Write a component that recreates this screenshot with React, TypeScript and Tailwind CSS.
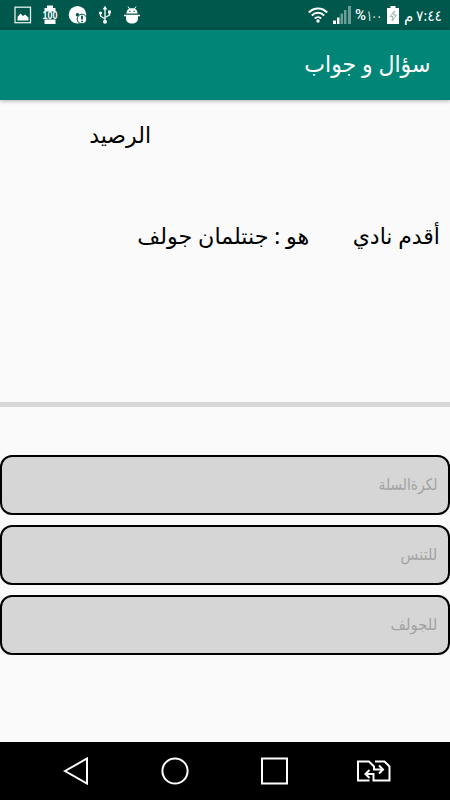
import React from 'react';

const answers = [
  { text: 'لكرةالسلة', scale: 'scale-x-[0.86]' },
  { text: 'للتنس', scale: 'scale-x-[0.91]' },
  { text: 'للجولف', scale: 'scale-x-[0.93]' },
];

const StatusBar: React.FC = () => (
  <div dir="ltr" className="h-[30px] bg-[#00574b] flex items-center justify-between pl-[14px] pr-2 text-white">
    <div className="flex items-center">
      <svg className="w-[18px] h-[18px]" viewBox="0 0 18 18">
        <rect x="1" y="1.2" width="15.5" height="15.5" fill="none" stroke="#e3eeec" strokeWidth="1.3" />
        <path d="M3.500 14.500V11l3-3.500 2.500 2.500 2-1.500 3.500 3v3z" fill="#fff" />
      </svg>
      <svg className="w-4 h-5 ml-[10px]" viewBox="0 0 16 20">
        <path d="M5 .5h6V3h2.500v3.500h-11V3H5zM2.500 14.500h11V19h-11z" fill="#fff" />
        <text x="8" y="14" textAnchor="middle" fontSize="10" fontWeight="bold" textLength="15" lengthAdjust="spacingAndGlyphs" fill="#fff" fontFamily="Liberation Sans">100</text>
      </svg>
      <svg className="w-5 h-5 ml-[10px]" viewBox="0 0 20 20">
        <circle cx="9.500" cy="9.800" r="8.800" fill="#fff" />
        <circle cx="9.500" cy="9.800" r="1.800" fill="#00574b" />
        <circle cx="14" cy="14" r="4.800" fill="#fff" stroke="#00574b" strokeWidth="1" />
        <path d="M14 10.800v3.700M14 15.700v1.500" stroke="#00574b" strokeWidth="1.800" />
      </svg>
      <svg className="w-[14px] h-5 ml-[10px]" viewBox="0 0 14 20">
        <path d="M7 3v13M2.500 8v3l4.500 3M11.500 7v3L7 12.500" fill="none" stroke="#e8f1ef" strokeWidth="1.400" />
        <path d="M7 .8l2.300 3.700H4.700zM10 5.500h3v3h-3z" fill="#fff" />
        <circle cx="2.500" cy="8" r="1.600" fill="#fff" />
        <circle cx="7" cy="16.800" r="2" fill="#fff" />
      </svg>
      <svg className="w-4 h-5 ml-3" viewBox="0 0 16 20">
        <path d="M2.500 8.500C2.500 5 4.500 3.300 8 3.300s5.500 1.700 5.500 5.200zM0 9.700h16v1.600h-2v2.200c0 3.500-2.500 5-6 5s-6-1.500-6-5v-2.200H0z" fill="#fff" />
        <path d="M4 1.500l2 3M12 1.500l-2 3" stroke="#fff" />
        <path d="M5.300 6.300h1.200M9.500 6.300h1.200" stroke="#00574b" strokeWidth="1.300" />
      </svg>
    </div>
    <div className="flex items-center">
      <svg className="w-5 h-[18px]" viewBox="0 0 20 18">
        <path d="M.8 6.500C6 1 14 1 19.200 6.500M3.800 9.500c3.500-3.600 8.900-3.600 12.400 0M6.800 12.500c1.800-1.800 4.600-1.800 6.400 0" fill="none" stroke="#fff" strokeWidth="2" />
        <circle cx="10" cy="15" r="1.700" fill="#fff" />
      </svg>
      <svg className="w-[18px] h-[18px] ml-[5px]" viewBox="0 0 18 18">
        <path d="M0 14.500h3V18H0zM4 11.500h2.500V18H4z" fill="#fff" />
        <path d="M7.500 7.500H10V18H7.500zM11 4h2.500v14H11zM15 0h3v18h-3z" fill="#6b9d95" />
      </svg>
      <span className="w-[28px] ml-1 mr-px flex items-center text-[15px] leading-5 whitespace-nowrap">
        <span className="w-[12px] font-['Roboto'] font-medium">%</span>
        <span className="w-4 origin-left scale-x-[0.6]">١٠٠</span>
      </span>
      <svg className="w-3 h-[18px] ml-[3px]" viewBox="0 0 12 18">
        <path d="M3.500 0h5v2H12v16H0V2h3.500z" fill="#fff" />
        <path d="M7.500 5L3 10.500h3L5 15l4.500-6H6.500z" fill="#fff" stroke="#9cb5b0" strokeWidth="1" />
      </svg>
      <span dir="rtl" className="w-[38px] ml-[5px] flex items-center justify-between text-[15px] leading-5 whitespace-nowrap">
        <span className="w-[26px] origin-right scale-x-[0.92]">٧:٤٤</span>
        <span>م</span>
      </span>
    </div>
  </div>
);

const NavBar: React.FC = () => (
  <div dir="ltr" className="h-[58px] bg-black flex items-center pl-[62px]">
    <svg className="w-[26px] h-7" viewBox="0 0 26 28" fill="none" stroke="#fff" strokeWidth="2">
      <path d="M3 14L25 1.500v25z" />
    </svg>
    <svg className="w-7 h-7 ml-[73px]" viewBox="0 0 28 28" fill="none" stroke="#fff" strokeWidth="2">
      <circle cx="14" cy="14" r="12.600" />
    </svg>
    <svg className="w-7 h-7 ml-[71px]" viewBox="0 0 28 28" fill="none" stroke="#fff" strokeWidth="2">
      <path d="M2 1.500h25v25H2z" />
    </svg>
    <svg className="w-[34px] h-[22px] ml-[69px]" viewBox="0 0 34 22" fill="none" stroke="#fff" strokeWidth="2">
      <path d="M12.500 20.500H1v-19h11l5 5V9.500h8M18 1.500h9.500l5 5v14H16.500V14H9" />
      <path d="M22 5.500l4 4-4 4M12.500 10l-4 4 4 4" />
    </svg>
  </div>
);

const App: React.FC = () => {
  return (
    <div dir="rtl" className="w-[450px] h-[800px] flex flex-col bg-[#fafafa] overflow-hidden font-['Noto_Sans','DejaVu_Sans',sans-serif] text-black">
      <StatusBar />
      <header className="h-[70px] bg-[#008577] shadow-[0_1px_4px_rgba(0,0,0,0.3)] flex items-center px-5 pb-1">
        <h1 className="origin-right scale-x-[0.96] text-white text-[23px] leading-8 whitespace-nowrap">سؤال و جواب</h1>
      </header>

      <main className="flex-1 flex flex-col">
        <div className="h-[302px] pt-[18px]">
          <p className="mr-[299px] text-[22px] leading-8 whitespace-nowrap">الرصيد</p>
          <div className="mt-[69px] flex pr-[10px] text-[22px] leading-8 whitespace-nowrap">
            <span className="w-[131px]">أقدم نادي</span>
            <span className="origin-right scale-x-[1.01]">هو : جنتلمان جولف</span>
          </div>
        </div>
        <div className="h-[5px] bg-[#d6d6d6]" />
        <div className="mt-12 flex flex-col gap-[10px]">
          {answers.map((answer) => (
            <button
              key={answer.text}
              className="h-[60px] w-full rounded-[12px] border-2 border-black bg-[#d6d6d6] px-[11px] pb-[2px] text-right text-[16px] text-[#a3a3a3]"
            >
              <span className={`inline-block origin-right ${answer.scale}`}>{answer.text}</span>
            </button>
          ))}
        </div>
      </main>

      <NavBar />
    </div>
  );
};

export default App;
